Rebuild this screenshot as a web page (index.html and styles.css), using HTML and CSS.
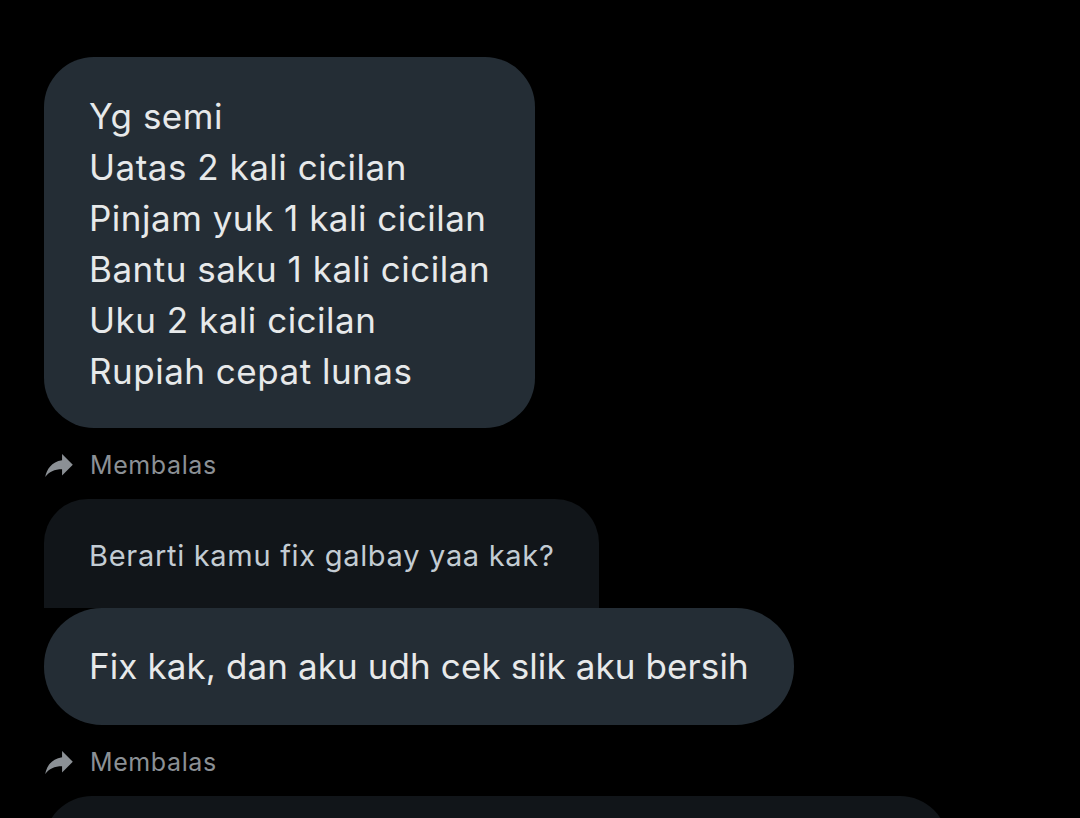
FILE: index.html
```html
<!DOCTYPE html>
<html lang="id">
<head>
<meta charset="utf-8">
<title>Chat</title>
<link rel="stylesheet" href="styles.css">
</head>
<body>
<main class="thread">
  <div class="bubble bubble-multi">
    <div>Yg semi</div>
    <div>Uatas 2 kali cicilan</div>
    <div>Pinjam yuk 1 kali cicilan</div>
    <div>Bantu saku 1 kali cicilan</div>
    <div>Uku 2 kali cicilan</div>
    <div>Rupiah cepat lunas</div>
  </div>
  <div class="reply-label">
    <svg class="reply-icon" viewBox="3 5 18 15" width="28" height="23" aria-hidden="true"><path d="M14 9V5l7 7-7 7v-4.1c-5 0-8.5 1.6-11 5.1 1-5 4-10 11-11z" fill="#8b9095"/></svg>
    <span>Membalas</span>
  </div>
  <div class="reply-group">
    <div class="quoted">Berarti kamu fix galbay yaa kak?</div>
    <div class="bubble bubble-single">Fix kak, dan aku udh cek slik aku bersih</div>
  </div>
  <div class="reply-label">
    <svg class="reply-icon" viewBox="3 5 18 15" width="28" height="23" aria-hidden="true"><path d="M14 9V5l7 7-7 7v-4.1c-5 0-8.5 1.6-11 5.1 1-5 4-10 11-11z" fill="#8b9095"/></svg>
    <span>Membalas</span>
  </div>
  <div class="quoted quoted-next"></div>
</main>
</body>
</html>
```

FILE: styles.css
```css
html, body {
  margin: 0;
  padding: 0;
  background: #000;
  height: 818px;
  overflow: hidden;
}

.thread {
  display: flex;
  flex-direction: column;
  align-items: flex-start;
  padding: 57px 0 0 44px;
  font-family: Inter, "Noto Sans", sans-serif;
}

.bubble {
  background: #242d35;
  color: #e7e9ea;
  font-size: 35px;
  line-height: 51px;
  padding: 0 45px 0 45px;
}

.bubble-multi {
  border-radius: 50px;
  letter-spacing: 0.5px;
  padding-top: 34px;
  padding-bottom: 31px;
}

.bubble-single {
  border-radius: 58px;
  letter-spacing: 0.1px;
  padding-top: 33px;
  padding-bottom: 33px;
  white-space: nowrap;
}

.reply-label {
  display: flex;
  align-items: center;
  gap: 17px;
  height: 30px;
  margin: 22px 0 19px;
  color: #8b9095;
  font-size: 25px;
  letter-spacing: 0.6px;
}

.reply-icon {
  flex: none;
  margin-left: 1px;
}

.reply-group {
  display: flex;
  flex-direction: column;
  align-items: flex-start;
}

.quoted {
  background: #111519;
  color: #c3ccd3;
  font-size: 29px;
  letter-spacing: 0.7px;
  line-height: 40px;
  padding: 37px 45px 32px;
  border-radius: 44px 44px 0 0;
  white-space: nowrap;
}

.quoted-next {
  width: 904px;
  height: 80px;
  padding: 0;
  box-sizing: border-box;
  border-radius: 48px 48px 0 0;
}
```
